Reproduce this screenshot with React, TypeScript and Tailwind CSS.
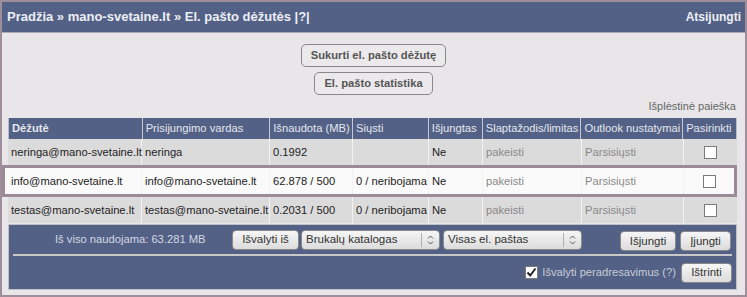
import React from 'react';

interface Box {
  email: string;
  login: string;
  used: string;
  send: string;
  off: string;
  active?: boolean;
}

const boxes: Box[] = [
  { email: 'neringa@mano-svetaine.lt', login: 'neringa', used: '0.1992', send: '', off: 'Ne' },
  { email: 'info@mano-svetaine.lt', login: 'info@mano-svetaine.lt', used: '62.878 / 500', send: '0 / neribojama', off: 'Ne', active: true },
  { email: 'testas@mano-svetaine.lt', login: 'testas@mano-svetaine.lt', used: '0.2031 / 500', send: '0 / neribojama', off: 'Ne' },
];

const cols = ['w-[134px]', 'w-[128px]', 'w-[83px]', 'w-[76px]', 'w-[54px]', 'w-[99px]', 'w-[102px]', 'w-[53px]'];

const Checkbox: React.FC<{ checked?: boolean }> = ({ checked }) => (
  <span className="inline-flex h-[13px] w-[13px] items-center justify-center border border-[#7a7a7a] bg-white">
    {checked && (
      <svg width="11" height="11" viewBox="0 0 11 11">
        <path d="M1.5 5.5 L4.2 8.5 L9.5 1.5" fill="none" stroke="#222" strokeWidth="2" />
      </svg>
    )}
  </span>
);

const Btn: React.FC<{ label: string; w: string }> = ({ label, w }) => (
  <button className={`${w} h-[20px] rounded-[4px] border border-[#8a8a8a] bg-gradient-to-b from-[#f6f6f6] to-[#dcdcdc] text-[11.5px] text-[#333]`}>
    {label}
  </button>
);

const Select: React.FC<{ label: string }> = ({ label }) => (
  <div className="flex h-[20px] w-[139px] items-center rounded-[4px] border border-[#8a8a8a] bg-gradient-to-b from-[#f6f6f6] to-[#dcdcdc] text-[11.5px] text-[#333]">
    <span className="flex-1 pl-[4px]">{label}</span>
    <span className="h-[14px] w-px bg-[#b0b0b0]" />
    <svg width="17" height="12" viewBox="0 0 17 12">
      <path d="M6 4.5 L8.5 2 L11 4.5 M6 7.5 L8.5 10 L11 7.5" fill="none" stroke="#555" strokeWidth="1" />
    </svg>
  </div>
);

const Row: React.FC<{ box: Box }> = ({ box }) => {
  const cells = [box.email, box.login, box.used, box.send, box.off, 'pakeisti', 'Parsisiųsti'];
  return (
    <div
      className={
        box.active
          ? 'ml-[-6px] flex h-[32px] border-[3px] border-[#9c8b97] bg-[#fafafa] pl-[3px]'
          : 'flex h-[26px] bg-[#dcdbdc]'
      }
    >
      {cells.map((c, i) => (
        <div
          key={i}
          className={`${cols[i]} flex items-center border-r border-[#f2f2f2] pl-[3px] text-[11.2px] ${i >= 5 ? 'text-[#888]' : 'text-[#222]'} whitespace-nowrap`}
        >
          {c}
        </div>
      ))}
      <div className={`${box.active ? 'w-[50px]' : 'w-[53px]'} flex items-center justify-center`}>
        <Checkbox />
      </div>
    </div>
  );
};

const App: React.FC = () => {
  const heads = ['Dėžutė', 'Prisijungimo vardas', 'Išnaudota (MB)', 'Siųsti', 'Išjungtas', 'Slaptažodis/limitas', 'Outlook nustatymai', 'Pasirinkti'];
  return (
    <div className="h-[297px] w-[747px] border-2 border-[#9d8e9a] bg-[#e8e6e8] font-['Liberation_Sans',Arial,sans-serif]">
      {/* Top bar */}
      <div className="flex h-[31px] items-center justify-between border-b border-[#a9acb8] bg-[#536186] pl-[5px] pr-[4px] font-bold text-[#eceef4]">
        <span className="text-[13px]">Pradžia » mano-svetaine.lt » El. pašto dėžutės |?|</span>
        <span className="text-[12px]">Atsijungti</span>
      </div>

      <div className="flex flex-col items-center pt-[11px]">
        <button className="h-[23px] rounded-[5px] border border-[#888] bg-[#ebe9eb] px-[9px] text-[11.2px] font-bold text-[#555]">
          Sukurti el. pašto dėžutę
        </button>
        <button className="mt-[5px] h-[23px] rounded-[5px] border border-[#888] bg-[#ebe9eb] px-[9px] text-[11.2px] font-bold text-[#555]">
          El. pašto statistika
        </button>
      </div>

      <div className="pr-[9px] pt-[4px] text-right text-[11px] leading-[14px] text-[#666]">Išplėstinė paieška</div>

      <div className="ml-[6px] mt-[5px] w-[729px]">
        {/* Header */}
        <div className="flex h-[21px] border-x border-[#b8bccb] bg-[#536186]">
          {heads.map((h, i) => (
            <div
              key={h}
              className={`${cols[i]} ${i === 0 ? 'font-bold' : ''} ${i === 7 ? 'border-r-0' : 'border-r'} flex items-center border-[#c4c8d4] pl-[3px] text-[11.2px] text-[#e4e7ef] whitespace-nowrap`}
            >
              {h}
            </div>
          ))}
        </div>

        {boxes.map((b) => (
          <Row key={b.email} box={b} />
        ))}

        {/* Footer */}
        <div className="mt-[1px] h-[66px] border border-[#c0c0c8] bg-[#536186] px-[4px]">
          <div className="flex h-[29px] items-center">
            <span className="w-[219px] pl-[42px] text-[11.2px] text-[#d4d8e2]">Iš viso naudojama: 63.281 MB</span>
            <Btn label="Išvalyti iš" w="w-[67px]" />
            <div className="ml-[2px]">
              <Select label="Brukalų katalogas" />
            </div>
            <div className="ml-[3px]">
              <Select label="Visas el. paštas" />
            </div>
            <div className="ml-[38px]">
              <Btn label="Išjungti" w="w-[56px]" />
            </div>
            <div className="ml-[4px]">
              <Btn label="Įjungti" w="w-[51px]" />
            </div>
          </div>
          <div className="h-[2px] bg-[#c8c8c8]" />
          <div className="flex h-[33px] items-center justify-end">
            <Checkbox checked />
            <span className="ml-[4px] mr-[5px] text-[11.2px] text-[#c8ccd6]">Išvalyti peradresavimus (?)</span>
            <Btn label="Ištrinti" w="w-[51px]" />
          </div>
        </div>
      </div>
    </div>
  );
};

export default App;
